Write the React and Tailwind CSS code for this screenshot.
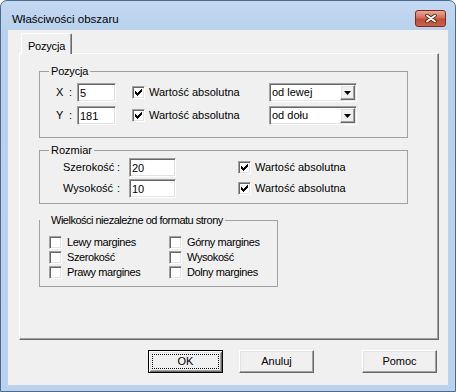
import React from 'react';

const sunken = 'border border-t-[#a0a0a0] border-l-[#a0a0a0] border-b-white border-r-white shadow-[inset_1px_1px_0_#696969,inset_-1px_-1px_0_#e3e3e3]';
const raised = 'border border-t-white border-l-white border-b-[#696969] border-r-[#696969] shadow-[inset_-1px_-1px_0_#a0a0a0,inset_1px_1px_0_#e3e3e3]';

function CheckBox({ checked }) {
  return (
    <span className={`w-[13px] h-[13px] shrink-0 bg-white flex items-center justify-center ${sunken}`}>
      {checked && (
        <svg width="7" height="7" viewBox="0 0 7 7" shapeRendering="crispEdges">
          <path
            d="M6 0h1v3h-1z M5 1h1v3h-1z M4 2h1v3h-1z M3 3h1v3h-1z M2 4h1v3h-1z M1 3h1v3h-1z M0 2h1v3h-1z"
            fill="#000"
          />
        </svg>
      )}
    </span>
  );
}

function Field({ value, className }) {
  return (
    <input
      readOnly
      value={value}
      className={`bg-white pl-[2px] outline-none text-[11px] leading-none ${sunken} ${className}`}
    />
  );
}

function Combo({ value }) {
  return (
    <div className={`w-[88px] h-[19px] bg-white flex items-center ${sunken}`}>
      <span className="flex-1 pl-[2px]">{value}</span>
      <span className={`w-[15px] h-[15px] mr-[1px] bg-[#f0f0f0] flex items-center justify-center ${raised}`}>
        <svg width="7" height="4" viewBox="0 0 7 4">
          <polygon points="0,0 7,0 3.5,4" fill="#000" />
        </svg>
      </span>
    </div>
  );
}

function Button({ children, isDefault }) {
  if (isDefault) {
    return (
      <div className="w-[75px] h-[23px] flex border border-black bg-[#f0f0f0] shadow-[inset_1px_1px_0_#fff,inset_-1px_-1px_0_#696969,inset_2px_2px_0_#e3e3e3,inset_-2px_-2px_0_#a0a0a0]">
        <span className="flex-1 m-[3px] border border-dotted border-black flex items-center justify-center">
          {children}
        </span>
      </div>
    );
  }
  return (
    <div className={`w-[75px] h-[23px] bg-[#f0f0f0] flex items-center justify-center ${raised}`}>
      {children}
    </div>
  );
}

export default function App() {
  return (
    <div className="w-[456px] h-[392px] font-['Liberation_Sans',Arial,sans-serif] text-[11px] text-black">
      <div className="w-full h-full flex flex-col rounded-t-[7px] border border-[#4d6a8c] bg-[linear-gradient(#c4d9f2,#b9d1ec_30px,#bad2ed)]">
        {/* title bar */}
        <div className="h-[29px] flex justify-between items-start shrink-0">
          <span className="pl-[11px] pt-[11px] text-[11.5px] leading-[14px]">Właściwości obszaru</span>
          <div className="mt-[9px] mr-[9px] w-[31px] h-[17px] rounded-[3px] border border-[#7a2b1f] bg-[linear-gradient(#eaa797,#d2705a_45%,#c24b34_55%,#c9614a)] flex items-center justify-center">
            <svg width="12" height="9" viewBox="0 0 12 9">
              <path d="M2 1.5 L10 7.5 M10 1.5 L2 7.5" stroke="#5a1d14" strokeWidth="3.6" strokeLinecap="round" />
              <path d="M2 1.5 L10 7.5 M10 1.5 L2 7.5" stroke="#fff" strokeWidth="2" strokeLinecap="round" />
            </svg>
          </div>
        </div>

        {/* client area */}
        <div className="mx-[7px] h-[355px] bg-[#f0f0f0] pl-[11px] pt-[3px]">
          <div className="relative z-10 ml-[2px] w-[51px] h-[21px] -mb-[1px] bg-[#f0f0f0] rounded-t-[2px] border-l border-t border-r border-l-white border-t-white border-r-[#696969] shadow-[inset_-1px_0_0_#a0a0a0] flex justify-center pt-[4px] tracking-[-0.2px]">
            Pozycja
          </div>

          <div className="w-[420px] h-[287px] border border-t-white border-l-white border-b-[#696969] border-r-[#696969] shadow-[inset_-1px_-1px_0_#a0a0a0] pl-[19px] pt-[11px] flex flex-col">
            {/* Pozycja */}
            <fieldset className="w-[369px] h-[73px] border border-[#a0a0a0] pt-[5px] flex flex-col gap-[4px]">
              <legend className="ml-[9px] px-[2px] leading-[13px] tracking-[-0.2px]">Pozycja</legend>
              {[
                ['X', '5', 'od lewej'],
                ['Y', '181', 'od dołu'],
              ].map(([axis, val, where]) => (
                <div key={axis} className="h-[19px] flex items-center">
                  <span className="ml-[16px] w-[13px]">{axis}</span>
                  <span className="w-[8px]">:</span>
                  <Field value={val} className="w-[39px] h-[19px]" />
                  <span className="ml-[16px]"><CheckBox checked /></span>
                  <span className="ml-[4px] w-[120px]">Wartość absolutna</span>
                  <Combo value={where} />
                </div>
              ))}
            </fieldset>

            {/* Rozmiar */}
            <fieldset className="mt-[6px] w-[369px] h-[60px] border border-[#a0a0a0] pt-[1px] flex flex-col gap-[2px]">
              <legend className="ml-[9px] px-[2px] leading-[13px]">Rozmiar</legend>
              {[
                ['Szerokość', '20'],
                ['Wysokość', '10'],
              ].map(([label, val]) => (
                <div key={label} className="h-[19px] flex items-center">
                  <span className="ml-[23px] w-[54px]">{label}</span>
                  <span className="w-[12px]">:</span>
                  <Field value={val} className="w-[47px] h-[19px]" />
                  <span className="ml-[62px]"><CheckBox checked /></span>
                  <span className="ml-[4px]">Wartość absolutna</span>
                </div>
              ))}
            </fieldset>

            {/* Wielkości niezależne */}
            <fieldset className="mt-[10px] w-[239px] h-[73px] border border-[#a0a0a0] pt-[8px] pl-[9px]">
              <legend className="-ml-[9px] pl-[11px] pr-[2px] leading-[13px] tracking-[-0.5px]">Wielkości niezależne od formatu strony</legend>
              <div className="grid grid-cols-[120px_auto] auto-rows-[15px] tracking-[-0.4px]">
                {['Lewy margines', 'Górny margines', 'Szerokość', 'Wysokość', 'Prawy margines', 'Dolny margines'].map((t) => (
                  <div key={t} className="flex items-center">
                    <CheckBox />
                    <span className="ml-[5px]">{t}</span>
                  </div>
                ))}
              </div>
            </fieldset>
          </div>

          <div className="mt-[10px] flex">
            <div className="ml-[129px]"><Button isDefault>OK</Button></div>
            <div className="ml-[16px]"><Button>Anuluj</Button></div>
            <div className="ml-[48px]"><Button>Pomoc</Button></div>
          </div>
        </div>
      </div>
    </div>
  );
}
